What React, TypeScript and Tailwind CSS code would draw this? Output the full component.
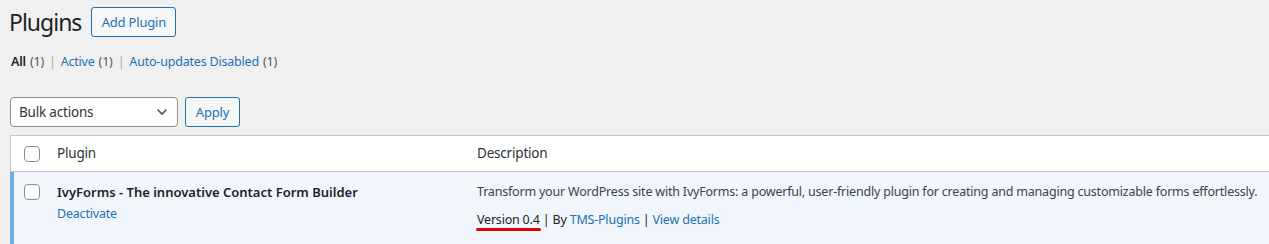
import React from "react";

const Checkbox = () => (
  <span className="block w-4 h-4 rounded-[4px] border border-[#8c8f94] bg-white shrink-0" />
);

export default function App() {
  return (
    <div className="w-full h-[244px] overflow-hidden bg-[#f0f0f1] text-[12.5px] tracking-[-0.2px] text-[#3c434a] font-['Noto_Sans',sans-serif]">
      {/* Heading */}
      <div className="flex items-center pl-[9px] pt-[7px] h-[37px]">
        <h1 className="text-[23px] leading-[29px] tracking-[-1px] text-[#1d2327] font-normal">Plugins</h1>
        <button className="ml-[10px] h-[30px] w-[85px] rounded-[3px] border border-[#2271b1] bg-[#f6f7f7] text-[#2271b1] text-[13px] tracking-[-0.2px] leading-none">
          Add Plugin
        </button>
      </div>

      {/* Filter links */}
      <div className="flex items-center pl-[11px] mt-[15px] h-[20px]">
        <span className="font-semibold text-[#1d2327]">All</span>
        <span className="ml-[4px] text-[#50575e]">(1)</span>
        <span className="mx-[5px] text-[#a7aaad]">|</span>
        <span className="text-[#2271b1]">Active</span>
        <span className="ml-[4px] text-[#50575e]">(1)</span>
        <span className="mx-[5px] text-[#a7aaad]">|</span>
        <span className="text-[#2271b1]">Auto-updates Disabled</span>
        <span className="ml-[4px] text-[#50575e]">(1)</span>
      </div>

      {/* Bulk actions */}
      <div className="flex items-center pl-[10px] mt-[25px] gap-[7px]">
        <div className="w-[168px] h-[30px] rounded-[4px] border border-[#8c8f94] bg-white flex items-center justify-between pl-[8px] pr-[9px] text-[#2c3338] text-[13.5px]">
          <span>Bulk actions</span>
          <svg width="12" height="8" viewBox="0 0 12 8" fill="none">
            <path d="M1.5 1.5 L6 6 L10.5 1.5" stroke="#50575e" strokeWidth="1.6" />
          </svg>
        </div>
        <button className="h-[30px] w-[55px] rounded-[3px] border border-[#2271b1] bg-[#f6f7f7] text-[#2271b1] text-[13px] leading-none">
          Apply
        </button>
      </div>

      {/* Table */}
      <div className="ml-[10px] mr-[-20px] mt-[8px] border-t border-[#c3c4c7]">
        {/* Header */}
        <div className="flex items-center h-[36px] bg-white border-l border-b border-[#c3c4c7] text-[13.5px] text-[#2c3338]">
          <div className="w-[466px] flex items-center shrink-0">
            <div className="w-[46px] pl-[13px] flex">
              <Checkbox />
            </div>
            <span>Plugin</span>
          </div>
          <span>Description</span>
        </div>
        {/* Row */}
        <div className="flex h-[80px] bg-[#f0f6fc] border-l-4 border-[#72aee6]">
          <div className="w-[463px] flex shrink-0 pt-[12px]">
            <div className="w-[43px] pl-[10px] flex">
              <Checkbox />
            </div>
            <div className="flex flex-col">
              <span className="font-semibold text-[13px] tracking-normal text-[#1d2327] leading-[18px] mt-[-1px]">
                IvyForms - The innovative Contact Form Builder
              </span>
              <span className="text-[#2271b1] leading-[18px] mt-[4px]">Deactivate</span>
            </div>
          </div>
          <div className="flex flex-col pt-[11px] whitespace-nowrap">
            <span className="leading-[18px]">
              Transform your WordPress site with IvyForms: a powerful, user-friendly plugin for creating and managing customizable forms effortlessly.
            </span>
            <div className="leading-[18px] mt-[10px]">
              <span className="relative text-[#1d2327]">
                Version 0.4
                <span className="absolute left-[-1px] right-[-1px] top-[17px] h-[3px] rounded-full bg-[#ee0000]" />
              </span>
              <span className="text-[#1d2327]"> | By </span>
              <span className="text-[#2271b1]">TMS-Plugins</span>
              <span className="text-[#1d2327]"> | </span>
              <span className="text-[#2271b1]">View details</span>
            </div>
          </div>
        </div>
      </div>
    </div>
  );
}
